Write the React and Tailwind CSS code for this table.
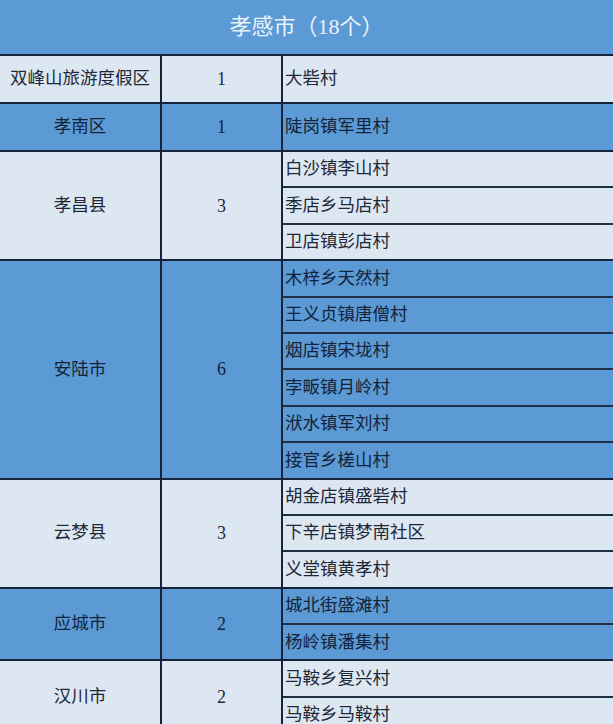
const GROUPS = [
  { name: "双峰山旅游度假区", count: 1, villages: ["大砦村"], blue: false, tall: true },
  { name: "孝南区", count: 1, villages: ["陡岗镇军里村"], blue: true, tall: true },
  { name: "孝昌县", count: 3, villages: ["白沙镇李山村", "季店乡马店村", "卫店镇彭店村"], blue: false },
  {
    name: "安陆市",
    count: 6,
    villages: ["木梓乡天然村", "王义贞镇唐僧村", "烟店镇宋垅村", "孛畈镇月岭村", "洑水镇军刘村", "接官乡槎山村"],
    blue: true,
  },
  { name: "云梦县", count: 3, villages: ["胡金店镇盛砦村", "下辛店镇梦南社区", "义堂镇黄孝村"], blue: false },
  { name: "应城市", count: 2, villages: ["城北街盛滩村", "杨岭镇潘集村"], blue: true },
  { name: "汉川市", count: 2, villages: ["马鞍乡复兴村", "马鞍乡马鞍村"], blue: false },
];

function Group({ g }) {
  const bg = g.blue ? "bg-[#5b9ad4] text-[#13233a]" : "bg-[#dde7f2] text-[#1d2838]";
  return (
    <div className={`flex border-t-2 border-[#15243a] ${bg}`}>
      <div className="w-[162px] shrink-0 flex items-center justify-center border-r-2 border-[#15243a] whitespace-nowrap">
        {g.name}
      </div>
      <div className="w-[121px] shrink-0 flex items-center justify-center border-r-2 border-[#15243a] text-[18px]">
        {g.count}
      </div>
      <div className="flex-1 flex flex-col">
        {g.villages.map((v, i) =>
          g.tall ? (
            <div key={v} className="h-[46px] flex items-center pl-[2px]">{v}</div>
          ) : (
            <div
              key={v}
              className={`flex items-center pl-[2px] ${
                i === 0 ? "h-[34.4px]" : "h-[36.4px] border-t-2 border-[#1f3047]"
              }`}
            >
              {v}
            </div>
          )
        )}
      </div>
    </div>
  );
}

export default function App() {
  return (
    <div
      className="w-[613px] h-[724px] overflow-hidden bg-[#dde7f2] text-[17.5px] leading-none"
      style={{ fontFamily: '"Liberation Serif", "Noto Sans CJK SC", serif' }}
    >
      <div className="h-[54px] bg-[#5b9ad4] flex items-center justify-center text-[22px] text-[#eaf1f8] pb-[1px]">
        孝感市（18个）
      </div>
      {GROUPS.map((g) => (
        <Group key={g.name} g={g} />
      ))}
    </div>
  );
}
